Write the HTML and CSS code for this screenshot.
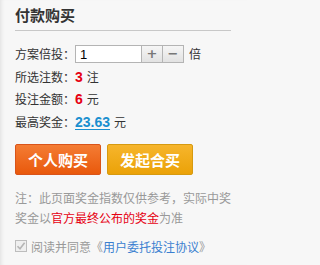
FILE: index.html
```html
<!DOCTYPE html>
<html lang="zh-CN">
<head>
<meta charset="utf-8">
<title>付款购买</title>
<link rel="stylesheet" href="styles.css">
</head>
<body>
<div class="panel">
  <h2 class="title">付款购买</h2>
  <div class="form">
    <div class="row">
      <span class="label">方案倍投：</span>
      <span class="stepper">
        <input class="times" type="text" value="1">
        <span class="step">+</span>
        <span class="step">−</span>
      </span>
      <span class="unit">倍</span>
    </div>
    <div class="row"><span class="label">所选注数：</span><b class="num red">3</b><span class="unit-s">注</span></div>
    <div class="row"><span class="label">投注金额：</span><b class="num red">6</b><span class="unit-s">元</span></div>
    <div class="row"><span class="label">最高奖金：</span><b class="num blue">23.63</b><span class="unit-s">元</span></div>
  </div>
  <div class="actions">
    <button class="btn btn-self">个人购买</button>
    <button class="btn btn-group">发起合买</button>
  </div>
  <p class="note">注：此页面奖金指数仅供参考，实际中奖<br>奖金以<span class="hl">官方最终公布的奖金</span>为准</p>
  <div class="agree">
    <span class="check"><svg width="10" height="10" viewBox="0 0 10 10"><path d="M1.5 5.2 L4 7.8 L8.6 1.8" fill="none" stroke="#b5b5b5" stroke-width="1.6"/></svg></span>
    <span class="agree-text">阅读并同意《<a class="link" href="#">用户委托投注协议</a>》</span>
  </div>
</div>
</body>
</html>
```

FILE: styles.css
```css
html, body {
  margin: 0;
  padding: 0;
  background: #f7f7f7;
}
body {
  font-family: "Noto Sans CJK SC", "Noto Sans", sans-serif;
  font-size: 12px;
  color: #333;
  min-height: 265px;
}
.panel {
  width: 216px;
  min-height: 265px;
  padding: 0 16px 0 15px;
  box-shadow: inset 4px 0 4px -3px rgba(0,0,0,0.10);
}
.title {
  margin: 0;
  height: 30px;
  line-height: 30px;
  font-size: 15px;
  font-weight: bold;
  color: #333;
  border-bottom: 1px solid #c8c8c8;
}
.form {
  padding-top: 12px;
}
.row {
  display: flex;
  align-items: center;
  height: 22.5px;
  line-height: 22px;
}
.label {
  width: 60px;
  flex: none;
}
.stepper {
  display: flex;
  height: 18px;
}
.times {
  box-sizing: border-box;
  width: 67px;
  height: 18px;
  margin: 0;
  padding: 0 4px;
  border: 1px solid #b4b4b4;
  background: #fff;
  font-family: "Liberation Sans", sans-serif;
  font-size: 13px;
  color: #000;
  outline: none;
}
.step {
  box-sizing: border-box;
  width: 21px;
  height: 18px;
  border: 1px solid #b4b4b4;
  border-left: none;
  background: linear-gradient(#f6f6f6, #e2e2e2);
  color: #777;
  font-family: "DejaVu Sans", sans-serif;
  font-weight: bold;
  font-size: 13px;
  line-height: 16px;
  text-align: center;
}
.unit {
  margin-left: 5px;
}
.num {
  font-family: "Liberation Sans", sans-serif;
  font-weight: bold;
  font-size: 14px;
}
.red {
  color: #e60012;
}
.blue {
  color: #1a8fcf;
  text-decoration: underline;
  text-underline-offset: 2px;
}
.unit-s {
  margin-left: 4px;
}
.actions {
  display: flex;
  gap: 6px;
  margin-top: 11px;
}
.btn {
  box-sizing: border-box;
  width: 86px;
  height: 31px;
  margin: 0;
  padding: 0;
  border-radius: 2px;
  font-family: "Noto Sans CJK SC", sans-serif;
  font-size: 15px;
  font-weight: bold;
  color: #fff;
  cursor: pointer;
}
.btn-self {
  border: 1px solid #d9541a;
  background: linear-gradient(#f47c34, #e9590c);
}
.btn-group {
  border: 1px solid #d69a10;
  background: linear-gradient(#f6b52c, #eba208);
}
.note {
  margin: 13px 0 0;
  line-height: 20px;
  color: #999;
  white-space: nowrap;
}
.hl {
  color: #e60012;
}
.agree {
  display: flex;
  align-items: center;
  margin-top: 8px;
  height: 20px;
  color: #999;
  white-space: nowrap;
}
.check {
  box-sizing: border-box;
  flex: none;
  width: 12px;
  height: 12px;
  border: 1px solid #bdbdbd;
  background: #efefef;
  display: flex;
  align-items: center;
  justify-content: center;
}
.agree-text {
  margin-left: 4px;
}
.link {
  color: #3a7fd0;
  text-decoration: none;
}
```
